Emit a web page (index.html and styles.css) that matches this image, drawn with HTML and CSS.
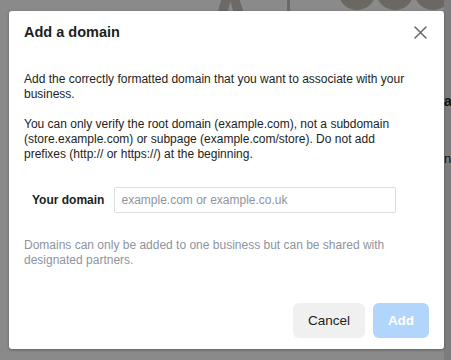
FILE: index.html
```html
<!DOCTYPE html>
<html lang="en">
<head>
    <meta charset="UTF-8" />
    <title>Add a domain</title>
    <meta name="viewport" content="width=device-width, initial-scale=1.0" />
    <link rel="stylesheet" href="styles.css">
</head>

<body>

    <!-- Dimmed page behind the dialog -->
    <div class="backdrop">
        <span class="bd-figure"></span>
        <span class="bd-line"></span>
        <span class="bd-dot bd-dot-1"></span>
        <span class="bd-dot bd-dot-2"></span>
        <span class="bd-dot bd-dot-3"></span>
        <span class="bd-strip"></span>
        <span class="bd-letter bd-letter-1">a</span>
        <span class="bd-letter bd-letter-2">n</span>
    </div>

    <!-- Add domain dialog -->
    <div class="modal">
        <div class="modal-header">
            <h2>Add a domain</h2>
            <button class="close-btn" aria-label="Close">
                <svg width="13" height="13" viewBox="0 0 13 13">
                    <path d="M1 1 L12 12 M12 1 L1 12" stroke="#606770" stroke-width="1.5" stroke-linecap="round" fill="none"/>
                </svg>
            </button>
        </div>

        <div class="modal-body">
            <p>Add the correctly formatted domain that you want to associate with your business.</p>
            <p>You can only verify the root domain (example.com), not a subdomain (store.example.com) or subpage (example.com/store). Do not add prefixes (http:// or https://) at the beginning.</p>

            <div class="field">
                <label for="domain">Your domain</label>
                <input type="text" id="domain" placeholder="example.com or example.co.uk">
            </div>

            <p class="note">Domains can only be added to one business but can be shared with designated partners.</p>
        </div>

        <div class="modal-footer">
            <button class="btn btn-cancel">Cancel</button>
            <button class="btn btn-add" disabled>Add</button>
        </div>
    </div>

</body>
</html>
```

FILE: styles.css
```css
/* --- Page / backdrop --- */
body {
    margin: 0;
    padding: 11px 7px 11px 9px;
    background: #8a8a8a;
    font-family: "Liberation Sans", Arial, sans-serif;
    color: #1c1e21;
    position: relative;
    height: 338px;
    overflow: hidden;
}

.backdrop span {
    position: absolute;
    display: block;
}

.bd-figure {
    left: 218px;
    top: -6px;
    width: 25px;
    height: 17px;
    background: #6d6966;
    clip-path: polygon(20% 0, 80% 0, 100% 100%, 60% 100%, 50% 40%, 40% 100%, 0 100%);
}

.bd-line {
    left: 287px;
    top: 0;
    width: 3px;
    height: 11px;
    background: #6d6966;
}

.bd-dot {
    top: -28px;
    width: 38px;
    height: 38px;
    border-radius: 50%;
    background: #6b6763;
}

.bd-dot-1 { left: 338px; }
.bd-dot-2 { left: 376px; }
.bd-dot-3 { left: 414px; }

.bd-strip {
    left: 444px;
    top: 0;
    width: 7px;
    height: 360px;
    background: #7c7c7c;
}

.bd-letter {
    left: 444px;
    font-size: 14px;
    font-weight: bold;
    color: #111;
}

.bd-letter-1 { top: 93px; }
.bd-letter-2 { top: 151px; font-weight: normal; font-size: 13px; }

/* --- Dialog --- */
.modal {
    position: relative;
    width: 435px;
    height: 338px;
    box-sizing: border-box;
    background: #fff;
    border-radius: 3px;
    box-shadow: 0 1px 3px rgba(0,0,0,0.3);
    display: flex;
    flex-direction: column;
}

.modal-header {
    display: flex;
    align-items: center;
    justify-content: space-between;
    padding: 6px 17px 0 15px;
    height: 30px;
}

.modal-header h2 {
    margin: 0;
    font-size: 14.5px;
    font-weight: bold;
    color: #1c1e21;
}

.close-btn {
    border: none;
    background: none;
    padding: 0;
    width: 13px;
    height: 13px;
    cursor: pointer;
    display: flex;
}

.modal-body {
    padding: 25px 30px 0 15px;
    font-size: 12px;
    line-height: 15px;
    color: #1c1e21;
    flex: 1;
}

.modal-body p {
    margin: 0 0 15px 0;
}

.field {
    display: flex;
    align-items: center;
    gap: 10px;
    padding: 10px 0 0 8px;
    margin-bottom: 25px;
}

.field label {
    font-weight: bold;
    font-size: 12px;
}

.field input {
    width: 282px;
    height: 26px;
    box-sizing: border-box;
    border: 1px solid #dadde1;
    border-radius: 2px;
    padding: 0 6px;
    font-family: inherit;
    font-size: 12px;
    color: #1c1e21;
}

.field input::placeholder {
    color: #90949c;
}

.modal-body .note {
    color: #8d949e;
}

.modal-footer {
    display: flex;
    justify-content: flex-end;
    gap: 8px;
    padding: 0 15px 11px 15px;
}

.btn {
    height: 35px;
    border: none;
    border-radius: 6px;
    font-family: inherit;
    font-size: 13.5px;
    cursor: pointer;
}

.btn-cancel {
    width: 72px;
    background: #f0f0f0;
    color: #1c1e21;
}

.btn-add {
    width: 56px;
    background: #b2d5fc;
    color: #fff;
    font-weight: bold;
}
```
